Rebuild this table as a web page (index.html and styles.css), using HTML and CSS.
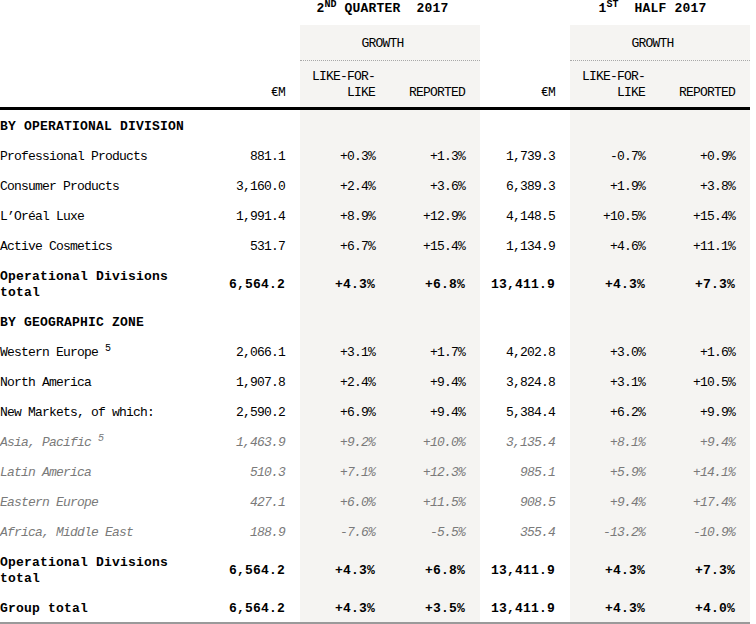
FILE: index.html
```html
<!DOCTYPE html>
<html>
<head>
<meta charset="utf-8">
<link rel="stylesheet" href="styles.css">
</head>
<body>
<table class="fin">
  <colgroup>
    <col class="c-label">
    <col class="c-num">
    <col class="c-g">
    <col class="c-g">
    <col class="c-num2">
    <col class="c-g">
    <col class="c-g">
  </colgroup>
  <thead>
    <tr class="h-period">
      <th></th><th></th>
      <th colspan="2" class="period">2<sup>ND</sup> QUARTER  2017</th>
      <th></th>
      <th colspan="2" class="period">1<sup>ST</sup>  HALF 2017</th>
    </tr>
    <tr class="h-growth">
      <th></th><th></th>
      <th colspan="2" class="growth">GROWTH</th>
      <th></th>
      <th colspan="2" class="growth">GROWTH</th>
    </tr>
    <tr class="h-cols">
      <th></th>
      <th>€M</th>
      <th>LIKE-FOR-<br>LIKE</th>
      <th>REPORTED</th>
      <th>€M</th>
      <th>LIKE-FOR-<br>LIKE</th>
      <th>REPORTED</th>
    </tr>
  </thead>
  <tbody>
    <tr class="section"><td class="label">BY OPERATIONAL DIVISION</td><td></td><td></td><td></td><td></td><td></td><td></td></tr>
    <tr><td class="label">Professional Products</td><td>881.1</td><td>+0.3%</td><td>+1.3%</td><td>1,739.3</td><td>-0.7%</td><td>+0.9%</td></tr>
    <tr><td class="label">Consumer Products</td><td>3,160.0</td><td>+2.4%</td><td>+3.6%</td><td>6,389.3</td><td>+1.9%</td><td>+3.8%</td></tr>
    <tr><td class="label">L’Oréal Luxe</td><td>1,991.4</td><td>+8.9%</td><td>+12.9%</td><td>4,148.5</td><td>+10.5%</td><td>+15.4%</td></tr>
    <tr><td class="label">Active Cosmetics</td><td>531.7</td><td>+6.7%</td><td>+15.4%</td><td>1,134.9</td><td>+4.6%</td><td>+11.1%</td></tr>
    <tr class="total"><td class="label">Operational Divisions total</td><td>6,564.2</td><td>+4.3%</td><td>+6.8%</td><td>13,411.9</td><td>+4.3%</td><td>+7.3%</td></tr>
    <tr class="section"><td class="label">BY GEOGRAPHIC ZONE</td><td></td><td></td><td></td><td></td><td></td><td></td></tr>
    <tr><td class="label">Western Europe <sup>5</sup></td><td>2,066.1</td><td>+3.1%</td><td>+1.7%</td><td>4,202.8</td><td>+3.0%</td><td>+1.6%</td></tr>
    <tr><td class="label">North America</td><td>1,907.8</td><td>+2.4%</td><td>+9.4%</td><td>3,824.8</td><td>+3.1%</td><td>+10.5%</td></tr>
    <tr><td class="label">New Markets, of which:</td><td>2,590.2</td><td>+6.9%</td><td>+9.4%</td><td>5,384.4</td><td>+6.2%</td><td>+9.9%</td></tr>
    <tr class="sub"><td class="label">Asia, Pacific <sup>5</sup></td><td>1,463.9</td><td>+9.2%</td><td>+10.0%</td><td>3,135.4</td><td>+8.1%</td><td>+9.4%</td></tr>
    <tr class="sub"><td class="label">Latin America</td><td>510.3</td><td>+7.1%</td><td>+12.3%</td><td>985.1</td><td>+5.9%</td><td>+14.1%</td></tr>
    <tr class="sub"><td class="label">Eastern Europe</td><td>427.1</td><td>+6.0%</td><td>+11.5%</td><td>908.5</td><td>+9.4%</td><td>+17.4%</td></tr>
    <tr class="sub"><td class="label">Africa, Middle East</td><td>188.9</td><td>-7.6%</td><td>-5.5%</td><td>355.4</td><td>-13.2%</td><td>-10.9%</td></tr>
    <tr class="total"><td class="label">Operational Divisions total</td><td>6,564.2</td><td>+4.3%</td><td>+6.8%</td><td>13,411.9</td><td>+4.3%</td><td>+7.3%</td></tr>
    <tr class="total group"><td class="label">Group total</td><td>6,564.2</td><td>+4.3%</td><td>+3.5%</td><td>13,411.9</td><td>+4.3%</td><td>+4.0%</td></tr>
  </tbody>
</table>
</body>
</html>
```

FILE: styles.css
```css
html, body {
  margin: 0;
  padding: 0;
  background: #fff;
}

body {
  font-family: "Liberation Mono", "DejaVu Sans Mono", "Noto Sans CJK SC", monospace;
  font-size: 13px;
  letter-spacing: -0.8px;
  color: #000;
}

.fin {
  width: 750px;
  table-layout: fixed;
  border-collapse: separate;
  border-spacing: 0;
}

.c-label { width: 200px; }
.c-num { width: 100px; }
.c-num2 { width: 90px; }
.c-g { width: 90px; background: #f5f4f2; }

.fin th,
.fin td {
  padding: 9px 15px 5px 0;
  line-height: 16px;
  text-align: right;
  vertical-align: middle;
  font-weight: normal;
}

.fin sup {
  font-size: 10px;
  line-height: 0;
  vertical-align: 5px;
  letter-spacing: 0;
}

/* header row 1 */
.h-period th {
  background: #fff;
  padding: 1px 15px 8px 0;
  vertical-align: top;
}

.h-period .period {
  text-align: center;
  font-weight: bold;
  letter-spacing: 0.2px;
  white-space: pre;
}

/* header row 2 */
.h-growth th {
  padding: 2px 15px 0 0;
  line-height: 33px;
}

.h-growth .growth {
  text-align: center;
  border-bottom: 1px dotted #a8a8a8;
}

/* header row 3 */
.h-cols th {
  padding: 8px 15px 6px 0;
  vertical-align: bottom;
  border-bottom: 3px solid #000;
}

/* body */
.fin td.label {
  text-align: left;
  padding-right: 0;
}

.section td {
  font-weight: bold;
  letter-spacing: 0.2px;
}

.total td {
  font-weight: bold;
  letter-spacing: 0.2px;
}

.sub td {
  font-style: italic;
  color: #7a7a7a;
}

.group td {
  border-bottom: 2px solid #9a9a9a;
}
```
